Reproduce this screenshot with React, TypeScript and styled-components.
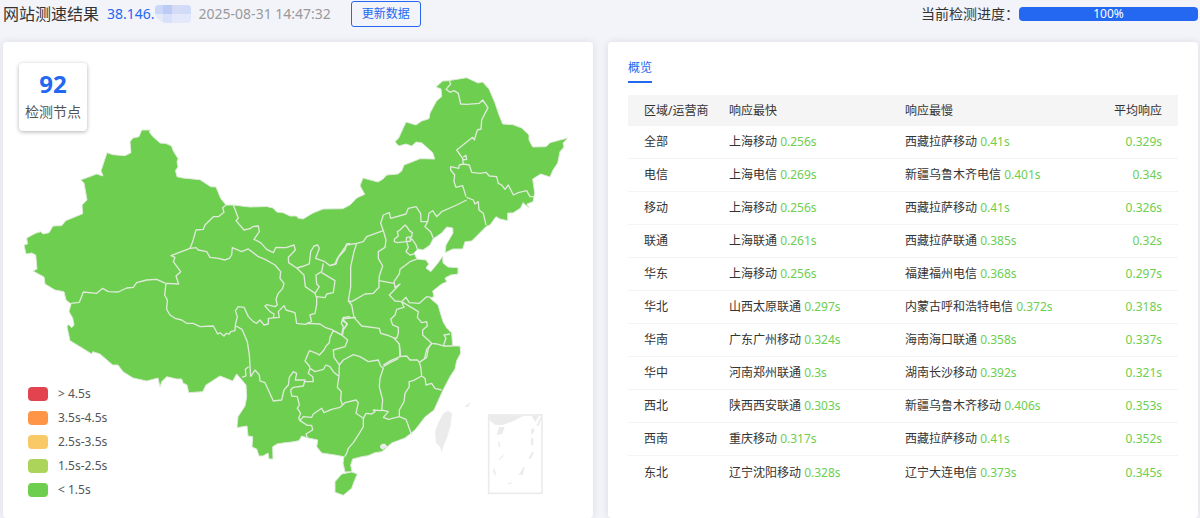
import React from "react";
import styled, { createGlobalStyle } from "styled-components";

const GlobalStyle = createGlobalStyle`
  * { box-sizing: border-box; }
  body {
    margin: 0;
    background: #f3f4f9;
    color: #333;
    font: 12px/16px "Noto Sans", "Noto Sans CJK SC", sans-serif;
  }
`;

const Page = styled.div`
  display: flex;
  flex-direction: column;
  min-height: 100vh;
  padding: 0 2px 0 3px;
`;

const Header = styled.header`
  display: flex;
  align-items: center;
  height: 28px;
  margin-bottom: 14px;
`;

const Title = styled.h1`
  margin: 0 8px 0 0;
  font-size: 16px;
  font-weight: 400;
  line-height: 24px;
`;

const Address = styled.span`
  display: flex;
  align-items: center;
  margin-right: 8px;
  color: #2468f2;
  font-size: 14px;
`;

const Mask = styled.svg`
  width: 36px;
  height: 18px;
`;

const Timestamp = styled.time`
  margin-right: 20px;
  color: #999;
  font-size: 14px;
`;

const RefreshButton = styled.button`
  width: 70px;
  height: 26px;
  padding: 0;
  border: 1px solid #2468f2;
  border-radius: 3px;
  background: transparent;
  color: #2468f2;
  font: inherit;
`;

const Progress = styled.div`
  display: flex;
  align-items: center;
  margin-left: auto;
  font-size: 14px;
`;

const ProgressBar = styled.div`
  width: 179px;
  height: 14px;
  border-radius: 4px;
  background: #2468f2;
  color: #fff;
  font-size: 12px;
  line-height: 14px;
  text-align: center;
`;

const Panels = styled.main`
  display: grid;
  flex: 1;
  grid-template-columns: 1fr 1fr;
  gap: 15px;
`;

const Panel = styled.section`
  min-width: 0;
  border-radius: 4px;
  background: #fff;
  box-shadow: 0 0 8px rgba(0, 0, 0, 0.1);
`;

const MapPanel = styled(Panel)`
  display: grid;
  > * { grid-area: 1 / 1; }
`;

const Map = styled.svg`
  display: block;
  width: 100%;
  height: auto;
`;

const NodeCount = styled.div`
  z-index: 1;
  align-self: start;
  justify-self: start;
  width: 68px;
  height: 68px;
  margin: 21px 0 0 16px;
  padding-top: 5px;
  border-radius: 4px;
  background: #fff;
  box-shadow: 0 1px 4px rgba(0, 0, 0, 0.3);
  color: #555;
  font-size: 14px;
  line-height: 24px;
  text-align: center;
`;

const Count = styled.strong`
  display: block;
  color: #2468f2;
  font-size: 24px;
  line-height: 32px;
`;

const Legend = styled.ul`
  z-index: 1;
  align-self: end;
  justify-self: start;
  margin: 0 0 16px 25px;
  padding: 0;
  color: #555;
  list-style: none;
`;

const LegendItem = styled.li<{ $color: string }>`
  display: flex;
  align-items: center;
  gap: 10px;
  height: 24px;
  &::before {
    content: "";
    width: 20px;
    height: 14px;
    border-radius: 4px;
    background: ${(p) => p.$color};
  }
`;

const Overview = styled(Panel)`
  padding: 16px 20px;
`;

const Tab = styled.button`
  display: block;
  height: 25px;
  margin-bottom: 12px;
  padding: 0 0 4px;
  border: 0;
  border-bottom: 2px solid #2468f2;
  background: none;
  color: #2468f2;
  font: inherit;
`;

const Table = styled.table`
  width: 100%;
  border-collapse: separate;
  border-spacing: 0;
  table-layout: fixed;
`;

const HeadRow = styled.tr`
  height: 31px;
  background: #f5f5f5;
`;

const HeadCell = styled.th<{ $width?: string; $end?: boolean }>`
  width: ${(p) => p.$width || "auto"};
  padding: 0 ${(p) => (p.$end ? "16px" : "0")} 0 16px;
  font-weight: 400;
  text-align: ${(p) => (p.$end ? "right" : "left")};
  white-space: nowrap;
`;

const Cell = styled.td<{ $end?: boolean }>`
  padding: 0 ${(p) => (p.$end ? "16px" : "0")} 0 16px;
  border-bottom: 1px solid #f4f4f4;
  text-align: ${(p) => (p.$end ? "right" : "left")};
  white-space: nowrap;
`;

const Row = styled.tr`
  height: 33px;
  &:last-child ${Cell} { border-bottom: 0; }
`;

const Fast = styled.span`
  color: #6dce50;
`;

const levels = [
  ["> 4.5s", "#e2434f"],
  ["3.5s-4.5s", "#ff9547"],
  ["2.5s-3.5s", "#f9c968"],
  ["1.5s-2.5s", "#acd45a"],
  ["< 1.5s", "#6dce50"],
];

const rows = [
  ["全部", "上海移动", "0.256s", "西藏拉萨移动", "0.41s", "0.329s"],
  ["电信", "上海电信", "0.269s", "新疆乌鲁木齐电信", "0.401s", "0.34s"],
  ["移动", "上海移动", "0.256s", "西藏拉萨移动", "0.41s", "0.326s"],
  ["联通", "上海联通", "0.261s", "西藏拉萨联通", "0.385s", "0.32s"],
  ["华东", "上海移动", "0.256s", "福建福州电信", "0.368s", "0.297s"],
  ["华北", "山西太原联通", "0.297s", "内蒙古呼和浩特电信", "0.372s", "0.318s"],
  ["华南", "广东广州移动", "0.324s", "海南海口联通", "0.358s", "0.337s"],
  ["华中", "河南郑州联通", "0.3s", "湖南长沙移动", "0.392s", "0.321s"],
  ["西北", "陕西西安联通", "0.303s", "新疆乌鲁木齐移动", "0.406s", "0.353s"],
  ["西南", "重庆移动", "0.317s", "西藏拉萨移动", "0.41s", "0.352s"],
  ["东北", "辽宁沈阳移动", "0.328s", "辽宁大连电信", "0.373s", "0.345s"],
];

const mainland =
  "M141.7 130L150 130 149.5 132.5 153 136.7 160 143 166 143.5 171.5 146 173.5 151.5 178 158.5 177 162 178 167 175.5 170.5 177 176.7 183 178 200 179.7 210.7 186.7 216 187 220.7 198.5 226 205 233 205 250 207 266.7 206.5 273 208 276.7 212 283 212.7 290 216 296.7 216 298 218 303 219 313 213 323 209 342.7 208.7 350 205 356.7 198 364.7 194.3 360 185.7 363 178 378 182 383 179 386.7 175 398 174 401.7 171 404 165 410 162.7 420 158.7 434.7 159 432.7 152.7 422 143 416 142 411.7 146 406 144 398.7 146 395 141.7 398.7 138 406 122 416 125 421.7 121 429 118.7 430 113 436.7 100.7 441.7 96.7 441 89 436 87 442.7 81 448 80.7 466.7 77.7 478 83 482.7 82 489 89 495 103 499 115 502.7 124 513 124.7 521.7 128 529 135 529 140 532.7 147 546 146.7 550 142.7 560 140 568 138 563 143 564 147 560 151.7 557.7 163 553 170 550 177 540.7 174 532.7 179 534.7 193 533 201.7 527 204 529 208 523 202.7 520.7 208 513 213 507.7 213 507.7 220.7 500 219 496 216.7 490 225 486.7 226 471.7 241 465 241.7 462.7 249 453 249 445 252.7 446 245 453 233 452.7 228 446.7 227 441.7 233 433 239 430 245 423 250 418 249 414 253 417 259 426 260 428.7 264 426 268 430.7 271.7 438 263 442.7 256 443 263 448 267 458 267.7 458 274 450.7 275 445 278 446.7 281.7 441.7 284 432.7 291 434 296.7 430 298 438 305 443 321.7 446.7 328 451.7 333 452.7 346 460 346 460.7 353 456.7 360.7 455 369 450 376.7 442.7 390.7 440 396.7 434 410 425 417 415 430 405 438 391.7 443 381.7 451.7 375 452.7 368 455.7 361.7 456.7 352.7 459 350.7 465 352 471.7 345 472 343 463 344 456.7 335 455 321.7 453 316.7 446.7 317.7 440 307 437.7 301.7 436 299 440.7 291.7 442 283 443 277 444 272.7 446.7 273 459 269 459 268 453 263 456 259 456 256.7 449 252 447 252.7 436.7 248 436 247 426 237 427.7 238 416.7 245 406 246.7 396.7 246 385 236.7 374 232.7 381 220 376 206 385 202.7 391.7 188.7 392.7 187 385 183 383 181.7 379 176.7 379 166.7 376.7 161.7 381.7 160 387 158 378 146.7 381 133 378 123 371.7 118 365 112.7 365 100 354 92.7 351.7 91.7 354 80 346.7 70 340.7 67 326.7 68.5 324.5 71.7 327.7 74 325 72.7 318 69 311.7 71 304 66 300 64 291.7 55 290 45 284 44 277 33 271 37 269 35.7 255 31.7 253 26 254 24 245 27.5 244 26.7 238 36 233 40.7 231.7 43 234 49 232.7 53 226 61.7 225.7 65.7 220.7 82.7 213.7 82 205 87 200 84 183 80.7 180 96.7 174 103 176 101 170.7 107 152.7 113 154.7 125 155.7 131 152.7 130 141.7 133 138 139 136.7Z";

/* Province borders, grouped by region; each region has its own origin. */
const borders = [
  {
    origin: "150 180",
    d: "M228 75L218 83 222 97 205 110 190 110 165 135 160 148 138 150 128 185 120 205 63 227 75 232 70 245 92 275 78 288 86 312 48 310M250 75L265 115 258 122 282 150 300 146 308 140 325 138 328 155 312 178 332 188 350 208 370 218 378 202 408 203 432 195 436 210 415 232 416 248 440 264 462 258 478 252 482 215 492 198 503 195 508 205 497 235 525 245 540 257 558 252 565 232 585 210 590 192 600 190M440 264L462 285 466 320 495 340 508 320 500 312 498 285 515 275 520 250M120 205L138 203 145 210 170 215 180 232 205 235 225 240 238 235 245 225 247 203 275 215 295 207 325 230 345 238 375 255 392 275 390 295 402 310 398 325 385 340 378 358 382 375 375 380 350 374 345 378 360 395 372 402 370 415M256 435L262 410 256 392 265 380 282 382 295 410 310 425 320 430 330 420 342 435 355 432 355 415 388 412 385 395 402 377 408 390 435 398 440 430 465 433 480 428M515 278L555 302 550 338 530 342 525 353 500 350 500 375 495 400 480 405 485 425 470 430M495 340L498 350M48 310L44 345 52 360 50 388 60 405 75 415 95 420 110 430 130 430 150 440 190 438 203 462 210 458 222 468 228 460 238 462 242 455 255 452 256 435M470 430L510 432 525 442 548 450 575 465 580 440 574 430 580 412 600 410",
  },
  {
    origin: "0 270",
    d: "M213 100L238 97 250 66 290 70 308 55 325 65 355 66 380 54 400 52 410 38 440 30 470 28 497 40",
  },
  {
    origin: "220 300",
    d: "M48 78L66 88 82 125 88 165 92 230M86 200L76 208 78 228 66 232M92 230L105 210 118 225 120 243 135 248 160 303 185 300 192 270 205 255 208 232 220 215 230 220 226 240 255 240 250 258 220 262 212 270 215 288 232 290 238 315 232 325 242 340 236 355 240 362 262 376 275 376 278 390 258 402 262 413M255 245L280 245 278 230 265 220 270 205 285 215 310 208 318 195 330 200 340 215 355 228M270 205L268 198 255 183 268 152 290 160 298 165 312 150 318 138 328 128 330 112 340 92 365 105 383 120 375 140 340 150 342 172 358 195 357 228 352 262 364 275 362 300 368 315M240 362L250 350 275 352 280 342 305 325 312 338 335 328 360 322 368 315 375 308 408 300 415 308 408 340 430 355 430 380 415 405 400 428 385 445 380 460 374 470M430 355L438 340 455 342 465 335 460 330 485 332 488 300 478 260 480 235 490 205 482 198 475 180 445 185 420 170 400 164 370 180 358 195M490 200L510 188 535 176M408 52L370 55 368 62 382 72 370 88 368 105",
  },
  {
    origin: "330 190",
    d: "M0 227L15 222 22 205 50 165 80 160 100 155 110 140 160 122 152 100 160 75 178 68 182 85 228 72 235 55 258 50 272 70 273 95 293 95 297 70 308 62 320 80 335 65 380 45 410 30M293 95L285 110 302 125 310 145M410 22L430 30 435 42 445 35 447 60 460 70 468 105M80 160L72 185 62 230 62 290 55 333 65 345 72 382 95 408 148 415 152 430 170 435 190 443 208 462 212 500M72 382L37 387 52 402 40 420M160 122L168 150 165 172 145 185 145 205 158 228 148 258 147 272 147 292 130 310 105 312 65 335 55 333M147 272L192 280M193 155L202 158 228 155 230 142 245 140 247 128 238 122 232 112 225 105 210 120 202 125 205 138 193 148ZM230 155L242 153 240 142 248 150 258 165 262 178M230 155L235 172 228 185 240 195 252 192M262 207L240 215 220 230 210 238 208 252 192 275 195 292 210 282 178 315 195 333 215 335 228 322 238 338 268 340 290 320 303 322M215 335L240 350 265 365 262 382 275 398 290 395 292 408 278 420 278 435 305 460 320 462 340 468 348 445 342 435 360 432M340 468L368 468M215 335L222 352 200 358 195 375 182 388 188 405 205 412 205 430 200 445 190 443M305 460L290 478 283 508",
  },
  {
    origin: "360 330",
    d: "M118 45L120 80 92 92 70 105M120 80L140 78 150 90 172 90 178 97 200 82 205 55 215 40M178 97L182 110 185 138 195 145 198 165 215 160 225 175 245 180M185 138L160 152 147 155 148 170 135 190 132 215 118 240 118 260 138 268 155 315M118 260L85 268 70 262 85 245 65 240",
  },
  {
    origin: "330 60",
    d: "M358 62L362 72 348 88 360 97 372 92 385 100 392 132 410 133 448 130 458 120 474 143 455 180 453 207 442 210 433 240 428 232 380 270 398 295 400 312 388 315 386 325 362 320 362 330 374 345 372 365 378 382 398 377 408 410M398 300L410 298 408 286 400 292M400 312L418 315 425 337 450 340 468 337 478 348 500 350 505 370 515 375 525 388 535 375 550 405 565 398 590 392 600 410 614 410",
  },
];

function ChinaMap() {
  return (
    <Map viewBox="3 42 590 476" role="img" aria-label="检测节点地图">
      <g stroke="#e0ebdc" strokeWidth="1" strokeLinejoin="round" fill="#6dce50">
        <path d={mainland} />
        <path d="M341.7 474L351.7 472 357.3 474 354 481.7 351.7 488.3 343.3 495.3 335 492.3 335 481.7Z" />
      </g>
      {borders.map((b) => (
        <g key={b.origin} transform={`translate(${b.origin}) scale(0.3333)`}>
          <path d={b.d} fill="none" stroke="#dfeadb" strokeWidth="4" strokeLinejoin="round" />
        </g>
      ))}
      <g transform="translate(360 330) scale(0.3333)" fill="#ebebeb">
        <path d="M265 242L276 250 272 285 262 320 250 350 245 367 240 350 228 340 225 305 235 278 250 250Z" />
        <path d="M313 230L330 217 326 230Z" />
        <path d="M60 348L66 341 76 341 82 350 74 355 68 359 61 354Z" />
        <rect x="386" y="255" width="160" height="235" fill="none" stroke="#ebebeb" strokeWidth="5" />
        <path d="M386 262L397 255 490 258 455 275 425 286 405 284 390 272Z" />
        <path d="M515 257L538 257 526 276ZM541 262L546 262 536 288 529 288ZM416 292L434 290 427 312 411 315ZM514 297L523 295 522 305 514 316ZM513 325L520 325 520 345 513 345ZM413 335L418 335 422 351 417 350ZM416 388L432 372 428 382 417 390ZM515 367L522 367 514 385 505 387ZM399 415L404 417 408 437 402 433ZM490 412L495 412 488 434 476 435ZM438 463L458 456 452 463Z" />
      </g>
    </Map>
  );
}

export default function App() {
  return (
    <>
      <GlobalStyle />
      <Page>
        <Header>
          <Title>网站测速结果</Title>
          <Address>
            38.146.
            <Mask viewBox="0 0 36 18" aria-hidden="true">
              <path d="M4 0H32Q36 0 36 4V14Q36 18 32 18H12Q4 18 0 9V4Q0 0 4 0Z" fill="#e3e9fa" />
              <path d="M4 0H8V9H0V4Q0 0 4 0Z" fill="#cbd7f8" />
              <path d="M8 0H17V9H8Z" fill="#bccbf5" />
              <path d="M17 0H26V9H17Z" fill="#d5dbf5" />
              <path d="M26 0H32Q36 0 36 4V9H26Z" fill="#cfdbf8" />
              <path d="M8 9H17V18H12Q10 18 8 17Z" fill="#d8e1f9" />
            </Mask>
          </Address>
          <Timestamp dateTime="2025-08-31T14:47:32">2025-08-31 14:47:32</Timestamp>
          <RefreshButton type="button">更新数据</RefreshButton>
          <Progress>
            <span id="progress-label">当前检测进度：</span>
            <ProgressBar
              role="progressbar"
              aria-labelledby="progress-label"
              aria-valuenow={100}
              aria-valuemin={0}
              aria-valuemax={100}
            >
              100%
            </ProgressBar>
          </Progress>
        </Header>
        <Panels>
          <MapPanel>
            <ChinaMap />
            <NodeCount>
              <Count>92</Count>
              检测节点
            </NodeCount>
            <Legend>
              {levels.map(([label, color]) => (
                <LegendItem key={label} $color={color}>
                  {label}
                </LegendItem>
              ))}
            </Legend>
          </MapPanel>
          <Overview>
            <Tab type="button">概览</Tab>
            <Table>
              <thead>
                <HeadRow>
                  <HeadCell $width="85px">区域/运营商</HeadCell>
                  <HeadCell $width="32%">响应最快</HeadCell>
                  <HeadCell $width="32%">响应最慢</HeadCell>
                  <HeadCell $end>平均响应</HeadCell>
                </HeadRow>
              </thead>
              <tbody>
                {rows.map(([area, fastest, fastTime, slowest, slowTime, average]) => (
                  <Row key={area}>
                    <Cell>{area}</Cell>
                    <Cell>
                      {fastest} <Fast>{fastTime}</Fast>
                    </Cell>
                    <Cell>
                      {slowest} <Fast>{slowTime}</Fast>
                    </Cell>
                    <Cell $end>
                      <Fast>{average}</Fast>
                    </Cell>
                  </Row>
                ))}
              </tbody>
            </Table>
          </Overview>
        </Panels>
      </Page>
    </>
  );
}
